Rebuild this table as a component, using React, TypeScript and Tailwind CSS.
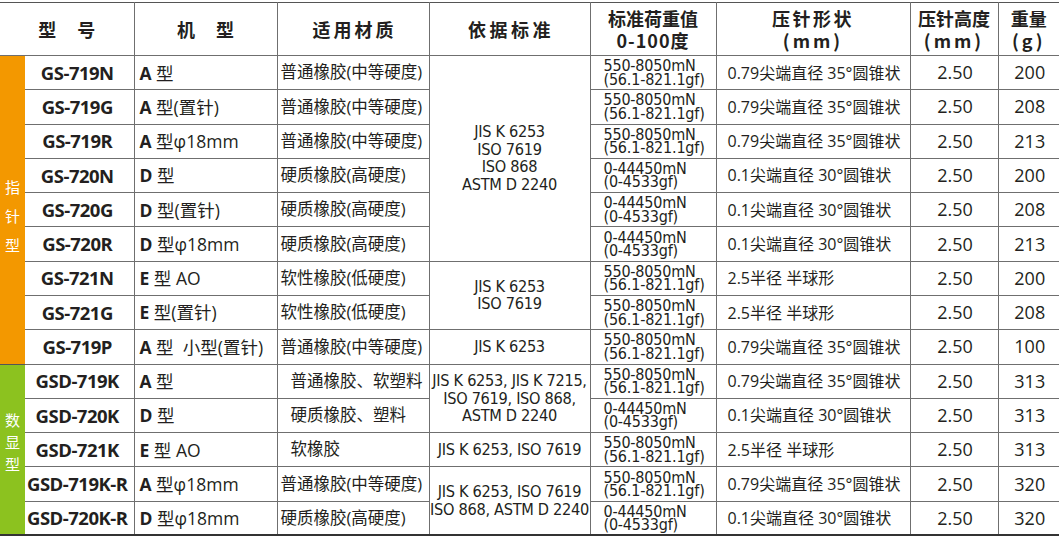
import React from "react";

const L1 = ["550-8050mN", "(56.1-821.1gf)"];
const L2 = ["0-44450mN", "(0-4533gf)"];
const S35 = "0.79尖端直径 35°圆锥状";
const S30 = "0.1尖端直径 30°圆锥状";
const SR = "2.5半径 半球形";

type Row = {
  model: string;
  letter: string;
  rest: string;
  mat: string;
  matPad?: boolean;
  load: string[];
  shape: string;
  w: string;
  std?: { span: number; lines: string[] };
};

const rows: Row[] = [
  { model: "GS-719N", letter: "A", rest: " 型", mat: "普通橡胶(中等硬度)", load: L1, shape: S35, w: "200", std: { span: 6, lines: ["JIS K 6253", "ISO 7619", "ISO 868", "ASTM D 2240"] } },
  { model: "GS-719G", letter: "A", rest: " 型(置针)", mat: "普通橡胶(中等硬度)", load: L1, shape: S35, w: "208" },
  { model: "GS-719R", letter: "A", rest: " 型φ18mm", mat: "普通橡胶(中等硬度)", load: L1, shape: S35, w: "213" },
  { model: "GS-720N", letter: "D", rest: " 型", mat: "硬质橡胶(高硬度)", load: L2, shape: S30, w: "200" },
  { model: "GS-720G", letter: "D", rest: " 型(置针)", mat: "硬质橡胶(高硬度)", load: L2, shape: S30, w: "208" },
  { model: "GS-720R", letter: "D", rest: " 型φ18mm", mat: "硬质橡胶(高硬度)", load: L2, shape: S30, w: "213" },
  { model: "GS-721N", letter: "E", rest: " 型 AO", mat: "软性橡胶(低硬度)", load: L1, shape: SR, w: "200", std: { span: 2, lines: ["JIS K 6253", "ISO 7619"] } },
  { model: "GS-721G", letter: "E", rest: " 型(置针)", mat: "软性橡胶(低硬度)", load: L1, shape: SR, w: "208" },
  { model: "GS-719P", letter: "A", rest: " 型  小型(置针)", mat: "普通橡胶(中等硬度)", load: L1, shape: S35, w: "100", std: { span: 1, lines: ["JIS K 6253"] } },
  { model: "GSD-719K", letter: "A", rest: " 型", mat: "普通橡胶、软塑料", matPad: true, load: L1, shape: S35, w: "313", std: { span: 2, lines: ["JIS K 6253, JIS K 7215,", "ISO 7619, ISO 868,", "ASTM D 2240"] } },
  { model: "GSD-720K", letter: "D", rest: " 型", mat: "硬质橡胶、塑料", matPad: true, load: L2, shape: S30, w: "313" },
  { model: "GSD-721K", letter: "E", rest: " 型 AO", mat: "软橡胶", matPad: true, load: L1, shape: SR, w: "313", std: { span: 1, lines: ["JIS K 6253, ISO 7619"] } },
  { model: "GSD-719K-R", letter: "A", rest: " 型φ18mm", mat: "普通橡胶(中等硬度)", load: L1, shape: S35, w: "320", std: { span: 2, lines: ["JIS K 6253, ISO 7619", "ISO 868, ASTM D 2240"] } },
  { model: "GSD-720K-R", letter: "D", rest: " 型φ18mm", mat: "硬质橡胶(高硬度)", load: L2, shape: S30, w: "320" },
];

const cjk = "font-['Open_Sans','Noto_Sans_CJK_SC',sans-serif]";
const tah = "font-['DejaVu_Sans_Condensed','DejaVu_Sans','Noto_Sans_CJK_SC',sans-serif]";

export default function App() {
  return (
    <div className="w-[1059px] h-[537px] bg-white pt-[2px] overflow-hidden text-[#231f20]">
      <table className="w-[1059px] table-fixed border-collapse border-t border-[#555]">
        <colgroup>
          <col className="w-[25px]" />
          <col className="w-[109px]" />
          <col className="w-[143px]" />
          <col className="w-[152px]" />
          <col className="w-[161px]" />
          <col className="w-[126px]" />
          <col className="w-[194px]" />
          <col className="w-[88px]" />
          <col className="w-[61px]" />
        </colgroup>
        <thead>
          <tr className="h-[53px] font-['Noto_Sans_CJK_SC',sans-serif] font-bold text-[18px] leading-[22px]">
            <th colSpan={2} className="border-r border-b border-[#6f6f6f] p-0 text-center">
              <span className="tracking-[21px] pl-[21px]">型号</span>
            </th>
            <th className="border-r border-b border-[#6f6f6f] p-0 text-center">
              <span className="tracking-[21px] pl-[21px]">机型</span>
            </th>
            <th className="border-r border-b border-[#6f6f6f] p-0 text-center">
              <span className="tracking-[3px] pl-[3px]">适用材质</span>
            </th>
            <th className="border-r border-b border-[#6f6f6f] p-0 text-center">
              <span className="tracking-[3.5px] pl-[3px]">依据标准</span>
            </th>
            <th className="border-r border-b border-[#6f6f6f] p-0 text-center">
              <div>标准荷重值</div>
              <div className="tracking-[1px]">0-100度</div>
            </th>
            <th className="border-r border-b border-[#6f6f6f] p-0 text-center">
              <div className="tracking-[2.5px]">压针形状</div>
              <div className="tracking-[3px]">(mm)</div>
            </th>
            <th className="border-r border-b border-[#6f6f6f] p-0 text-center">
              <div>压针高度</div>
              <div className="tracking-[3px]">(mm)</div>
            </th>
            <th className="border-b border-[#6f6f6f] p-0 text-center">
              <div>重量</div>
              <div className="tracking-[3px]">(g)</div>
            </th>
          </tr>
        </thead>
        <tbody>
          {rows.map((r, i) => {
            const last = i === rows.length - 1;
            const bb = last ? "border-b-2 border-b-[#333]" : "border-b";
            return (
              <tr key={r.model} className="h-[34.29px]">
                {i === 0 && (
                  <td rowSpan={9} className="bg-[#f39800] border-b border-[#555] p-0 align-middle">
                    <div className="flex justify-center pt-[28px]">
                      <span className="[writing-mode:vertical-rl] text-white text-[15px] leading-[15px] tracking-[14px] font-['Noto_Sans_CJK_SC',sans-serif]">
                        指针型
                      </span>
                    </div>
                  </td>
                )}
                {i === 9 && (
                  <td rowSpan={5} className="bg-[#8cc21f] border-b-2 border-b-[#333] p-0 align-middle">
                    <div className="flex justify-center pb-[6px]">
                      <span className="[writing-mode:vertical-rl] text-white text-[15px] leading-[15px] tracking-[7px] font-['Noto_Sans_CJK_SC',sans-serif]">
                        数显型
                      </span>
                    </div>
                  </td>
                )}
                <td className={`border-r ${bb} border-[#6f6f6f] p-0 pr-[4px] text-center font-['Open_Sans',sans-serif] font-bold text-[18.5px] tracking-[-0.5px] whitespace-nowrap`}>
                  {r.model}
                </td>
                <td className={`border-r ${bb} border-[#6f6f6f] p-0 pl-[5px] text-[17.5px] ${cjk} whitespace-nowrap`}>
                  <span className="font-bold">{r.letter}</span>
                  <span className="whitespace-pre">{r.rest}</span>
                </td>
                <td className={`border-r ${bb} border-[#6f6f6f] p-0 ${r.matPad ? "pl-[13px]" : "pl-[3px]"} text-[16.5px] ${cjk} whitespace-nowrap`}>
                  {r.mat}
                </td>
                {r.std && (
                  <td
                    rowSpan={r.std.span}
                    className={`border-r ${r.std.span + i === rows.length ? "border-b-2 border-b-[#333]" : "border-b"} border-[#6f6f6f] p-0 text-center ${tah} text-[16.2px] leading-[17.5px] tracking-[-0.3px] whitespace-nowrap`}
                  >
                    {r.std.lines.map((l) => (
                      <div key={l}>{l}</div>
                    ))}
                  </td>
                )}
                <td className={`border-r ${bb} border-[#6f6f6f] p-0 pl-[13px] ${tah} text-[16px] leading-[13.5px] tracking-[-0.2px] whitespace-nowrap`}>
                  <div>{r.load[0]}</div>
                  <div>{r.load[1]}</div>
                </td>
                <td className={`border-r ${bb} border-[#6f6f6f] p-0 pl-[11px] text-[16px] ${cjk} whitespace-nowrap`}>
                  {r.shape}
                </td>
                <td className={`border-r ${bb} border-[#6f6f6f] p-0 text-center text-[18px] font-['Open_Sans',sans-serif] pl-[2px]`}>
                  2.50
                </td>
                <td className={`${bb} border-[#6f6f6f] p-0 text-center text-[18px] font-['Open_Sans',sans-serif] pl-[2px]`}>
                  {r.w}
                </td>
              </tr>
            );
          })}
        </tbody>
      </table>
    </div>
  );
}
